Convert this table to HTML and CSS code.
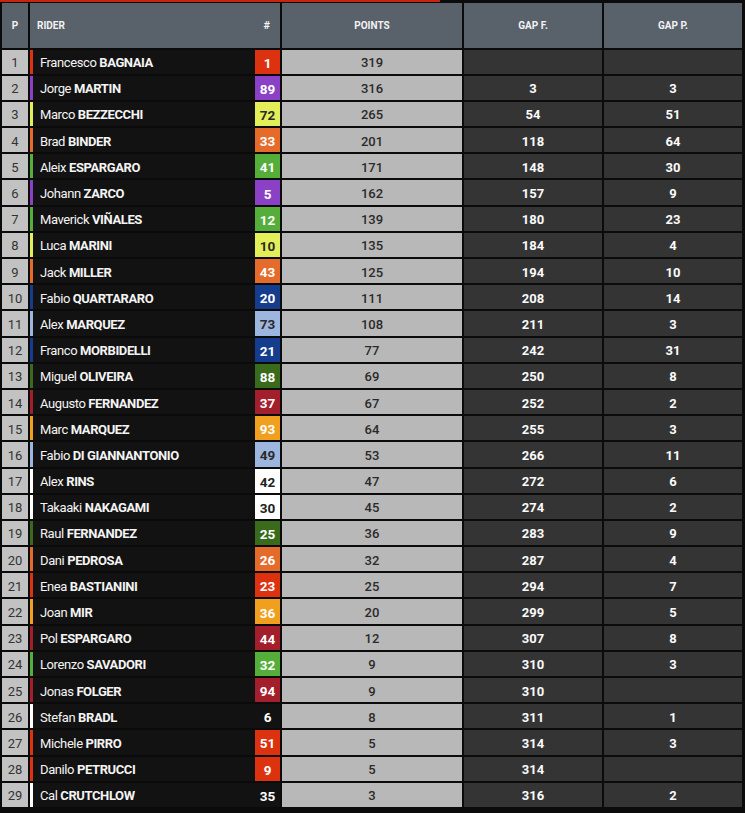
FILE: index.html
```html
<!DOCTYPE html>
<html>
<head>
<meta charset="utf-8">
<link rel="stylesheet" href="styles.css">
</head>
<body>
<div class="topbar"></div>
<div class="table">
  <div class="row head">
    <div class="h">P</div>
    <div class="h rider-h"><span>RIDER</span><span class="hash">#</span></div>
    <div class="h">POINTS</div>
    <div class="h">GAP F.</div>
    <div class="h">GAP P.</div>
  </div>
  <div class="row"><div class="pos">1</div><div class="rider red"><span class="bar"></span><span class="name">Francesco <b>BAGNAIA</b></span><span class="num">1</span></div><div class="pts">319</div><div class="gap"></div><div class="gap"></div></div>
  <div class="row"><div class="pos">2</div><div class="rider purple"><span class="bar"></span><span class="name">Jorge <b>MARTIN</b></span><span class="num">89</span></div><div class="pts">316</div><div class="gap">3</div><div class="gap">3</div></div>
  <div class="row"><div class="pos">3</div><div class="rider lime"><span class="bar"></span><span class="name">Marco <b>BEZZECCHI</b></span><span class="num">72</span></div><div class="pts">265</div><div class="gap">54</div><div class="gap">51</div></div>
  <div class="row"><div class="pos">4</div><div class="rider orange"><span class="bar"></span><span class="name">Brad <b>BINDER</b></span><span class="num">33</span></div><div class="pts">201</div><div class="gap">118</div><div class="gap">64</div></div>
  <div class="row"><div class="pos">5</div><div class="rider green"><span class="bar"></span><span class="name">Aleix <b>ESPARGARO</b></span><span class="num">41</span></div><div class="pts">171</div><div class="gap">148</div><div class="gap">30</div></div>
  <div class="row"><div class="pos">6</div><div class="rider purple"><span class="bar"></span><span class="name">Johann <b>ZARCO</b></span><span class="num">5</span></div><div class="pts">162</div><div class="gap">157</div><div class="gap">9</div></div>
  <div class="row"><div class="pos">7</div><div class="rider green"><span class="bar"></span><span class="name">Maverick <b>VIÑALES</b></span><span class="num">12</span></div><div class="pts">139</div><div class="gap">180</div><div class="gap">23</div></div>
  <div class="row"><div class="pos">8</div><div class="rider lime"><span class="bar"></span><span class="name">Luca <b>MARINI</b></span><span class="num">10</span></div><div class="pts">135</div><div class="gap">184</div><div class="gap">4</div></div>
  <div class="row"><div class="pos">9</div><div class="rider orange"><span class="bar"></span><span class="name">Jack <b>MILLER</b></span><span class="num">43</span></div><div class="pts">125</div><div class="gap">194</div><div class="gap">10</div></div>
  <div class="row"><div class="pos">10</div><div class="rider navy"><span class="bar"></span><span class="name">Fabio <b>QUARTARARO</b></span><span class="num">20</span></div><div class="pts">111</div><div class="gap">208</div><div class="gap">14</div></div>
  <div class="row"><div class="pos">11</div><div class="rider sky"><span class="bar"></span><span class="name">Alex <b>MARQUEZ</b></span><span class="num">73</span></div><div class="pts">108</div><div class="gap">211</div><div class="gap">3</div></div>
  <div class="row"><div class="pos">12</div><div class="rider navy"><span class="bar"></span><span class="name">Franco <b>MORBIDELLI</b></span><span class="num">21</span></div><div class="pts">77</div><div class="gap">242</div><div class="gap">31</div></div>
  <div class="row"><div class="pos">13</div><div class="rider forest"><span class="bar"></span><span class="name">Miguel <b>OLIVEIRA</b></span><span class="num">88</span></div><div class="pts">69</div><div class="gap">250</div><div class="gap">8</div></div>
  <div class="row"><div class="pos">14</div><div class="rider maroon"><span class="bar"></span><span class="name">Augusto <b>FERNANDEZ</b></span><span class="num">37</span></div><div class="pts">67</div><div class="gap">252</div><div class="gap">2</div></div>
  <div class="row"><div class="pos">15</div><div class="rider amber"><span class="bar"></span><span class="name">Marc <b>MARQUEZ</b></span><span class="num">93</span></div><div class="pts">64</div><div class="gap">255</div><div class="gap">3</div></div>
  <div class="row"><div class="pos">16</div><div class="rider sky"><span class="bar"></span><span class="name">Fabio <b>DI GIANNANTONIO</b></span><span class="num">49</span></div><div class="pts">53</div><div class="gap">266</div><div class="gap">11</div></div>
  <div class="row"><div class="pos">17</div><div class="rider white"><span class="bar"></span><span class="name">Alex <b>RINS</b></span><span class="num">42</span></div><div class="pts">47</div><div class="gap">272</div><div class="gap">6</div></div>
  <div class="row"><div class="pos">18</div><div class="rider white"><span class="bar"></span><span class="name">Takaaki <b>NAKAGAMI</b></span><span class="num">30</span></div><div class="pts">45</div><div class="gap">274</div><div class="gap">2</div></div>
  <div class="row"><div class="pos">19</div><div class="rider forest"><span class="bar"></span><span class="name">Raul <b>FERNANDEZ</b></span><span class="num">25</span></div><div class="pts">36</div><div class="gap">283</div><div class="gap">9</div></div>
  <div class="row"><div class="pos">20</div><div class="rider orange"><span class="bar"></span><span class="name">Dani <b>PEDROSA</b></span><span class="num">26</span></div><div class="pts">32</div><div class="gap">287</div><div class="gap">4</div></div>
  <div class="row"><div class="pos">21</div><div class="rider red"><span class="bar"></span><span class="name">Enea <b>BASTIANINI</b></span><span class="num">23</span></div><div class="pts">25</div><div class="gap">294</div><div class="gap">7</div></div>
  <div class="row"><div class="pos">22</div><div class="rider amber"><span class="bar"></span><span class="name">Joan <b>MIR</b></span><span class="num">36</span></div><div class="pts">20</div><div class="gap">299</div><div class="gap">5</div></div>
  <div class="row"><div class="pos">23</div><div class="rider maroon"><span class="bar"></span><span class="name">Pol <b>ESPARGARO</b></span><span class="num">44</span></div><div class="pts">12</div><div class="gap">307</div><div class="gap">8</div></div>
  <div class="row"><div class="pos">24</div><div class="rider green"><span class="bar"></span><span class="name">Lorenzo <b>SAVADORI</b></span><span class="num">32</span></div><div class="pts">9</div><div class="gap">310</div><div class="gap">3</div></div>
  <div class="row"><div class="pos">25</div><div class="rider maroon"><span class="bar"></span><span class="name">Jonas <b>FOLGER</b></span><span class="num">94</span></div><div class="pts">9</div><div class="gap">310</div><div class="gap"></div></div>
  <div class="row"><div class="pos">26</div><div class="rider plain"><span class="bar"></span><span class="name">Stefan <b>BRADL</b></span><span class="num">6</span></div><div class="pts">8</div><div class="gap">311</div><div class="gap">1</div></div>
  <div class="row"><div class="pos">27</div><div class="rider red"><span class="bar"></span><span class="name">Michele <b>PIRRO</b></span><span class="num">51</span></div><div class="pts">5</div><div class="gap">314</div><div class="gap">3</div></div>
  <div class="row"><div class="pos">28</div><div class="rider red"><span class="bar"></span><span class="name">Danilo <b>PETRUCCI</b></span><span class="num">9</span></div><div class="pts">5</div><div class="gap">314</div><div class="gap"></div></div>
  <div class="row"><div class="pos">29</div><div class="rider plain"><span class="bar"></span><span class="name">Cal <b>CRUTCHLOW</b></span><span class="num">35</span></div><div class="pts">3</div><div class="gap">316</div><div class="gap">2</div></div>
</div>
</body>
</html>
```
FILE: styles.css
```css
html, body {
  margin: 0;
  padding: 0;
  background: #0b0b0b;
  font-family: Roboto, "Liberation Sans", sans-serif;
}
.topbar {
  width: 440px;
  height: 2px;
  background: #c9240f;
  margin-bottom: 1px;
}
.table {
  display: flex;
  flex-direction: column;
  gap: 2px;
  padding-left: 2px;
  width: 740px;
}
.row {
  display: grid;
  grid-template-columns: 26px 250px 180px 138px 138px;
  column-gap: 2px;
  height: 24.2px;
}
.row.head {
  height: 44.5px;
}
.h {
  background: #59616b;
  color: #f2f2f2;
  font-size: 10px;
  font-weight: 700;
  display: flex;
  align-items: center;
  justify-content: center;
  padding-top: 1px;
}
.rider-h {
  justify-content: space-between;
  padding: 1px 10px 0 7px;
}
.hash {
  font-size: 11px;
}
.pos, .name, .num, .pts, .gap {
  padding-top: 2px;
  box-sizing: border-box;
}
.pos {
  background: #c2c2c2;
  color: #333;
  font-size: 13px;
  display: flex;
  align-items: center;
  justify-content: center;
}
.rider {
  background: #121212;
  display: flex;
  align-items: stretch;
  --c: #fff;
  --t: #fff;
}
.bar {
  width: 3px;
  background: var(--c);
}
.name {
  flex: 1;
  padding-left: 7px;
  color: #f4f4f4;
  font-size: 13px;
  letter-spacing: -0.4px;
  display: flex;
  align-items: center;
  white-space: pre;
}
.name b {
  font-weight: 700;
}
.num {
  width: 25px;
  background: var(--c);
  color: var(--t);
  font-size: 13.5px;
  font-weight: 700;
  display: flex;
  align-items: center;
  justify-content: center;
}
.pts {
  background: #b8b8b8;
  color: #2a2a2a;
  font-size: 13px;
  font-weight: 500;
  display: flex;
  align-items: center;
  justify-content: center;
}
.gap {
  background: #343434;
  color: #fafafa;
  font-size: 13px;
  font-weight: 700;
  display: flex;
  align-items: center;
  justify-content: center;
}
.red { --c: #dd3210; }
.purple { --c: #8a41c6; }
.lime { --c: #e3ef58; --t: #2a2a2a; }
.orange { --c: #e56b2b; }
.green { --c: #56ae3a; }
.navy { --c: #163c8e; }
.sky { --c: #9db6e0; --t: #2a2a2a; }
.forest { --c: #3a6a1b; }
.maroon { --c: #a41f2c; }
.amber { --c: #f0a01e; }
.white { --c: #ffffff; --t: #222; }
.plain { --c: #ffffff; }
.plain .num { background: #121212; color: #fff; }
```
